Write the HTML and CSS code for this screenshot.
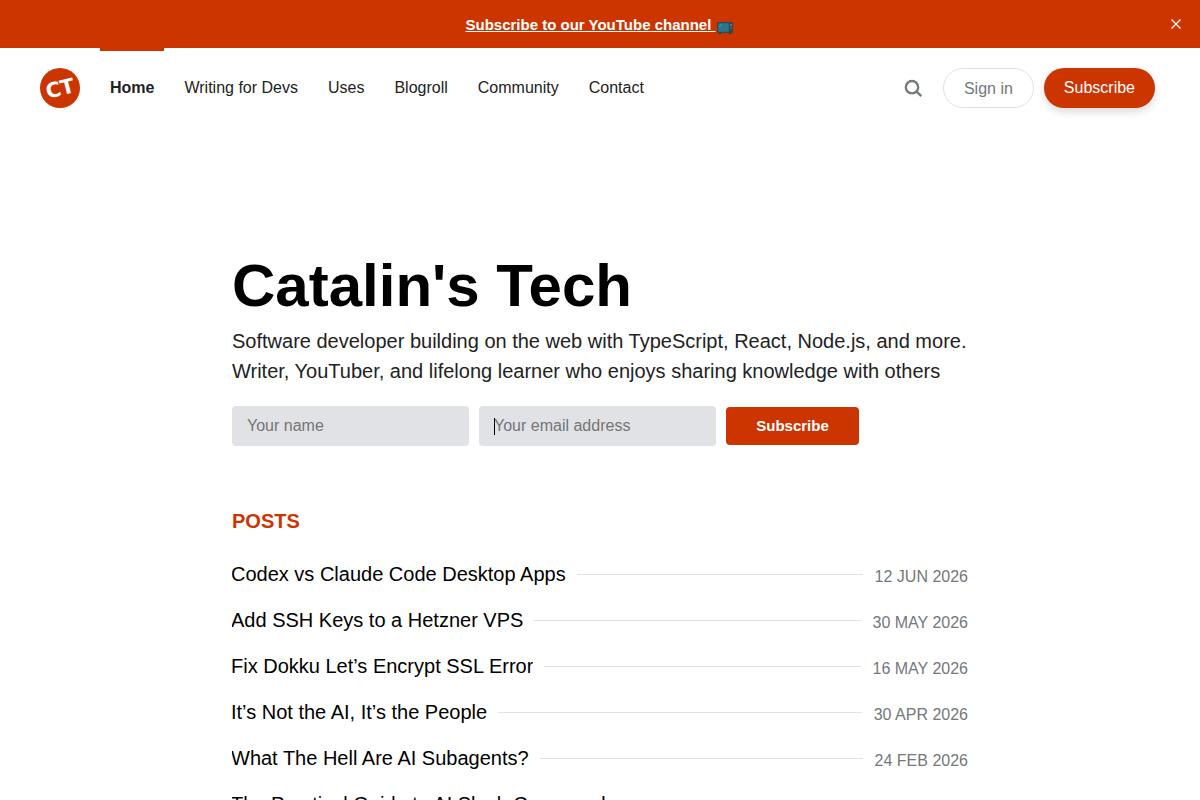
FILE: index.html
```html
<!DOCTYPE html>
<html lang="en">
<head>
    <meta charset="UTF-8">
    <meta name="viewport" content="width=device-width, initial-scale=1.0">
    <title>Catalin's Tech</title>
    <link rel="stylesheet" href="styles.css">
</head>
<body>

    <div class="announcement">
        <a href="#">Subscribe to our YouTube channel <svg class="tv" viewBox="0 0 19 14" width="19" height="14"><rect x="1" y="1" width="16" height="11" rx="1" fill="#37474f"/><rect x="2.2" y="2.3" width="10.6" height="8.4" rx="1" fill="#24788f"/><path d="M3.5 5.5l2-2" stroke="#58a5b5"/><path d="M15 3v2M15 6.5v1" stroke="#8aa0aa"/><path d="M3 12h2v1H3zM13 12h2v1h-2z" fill="#263238"/></svg></a>
        <button class="close" aria-label="Close">
            <svg width="10" height="10" viewBox="0 0 10 10"><path d="M0.5 0.5l9 9M9.5 0.5l-9 9" stroke="#fff" stroke-width="1.2"/></svg>
        </button>
    </div>

    <header class="header">
        <a href="#" class="logo">
            <svg width="40" height="40" viewBox="0 0 40 40">
                <circle cx="20" cy="20" r="20" fill="#cc3500"/>
                <text x="20" y="27.5" text-anchor="middle" transform="rotate(-14 20 20)">CT</text>
            </svg>
        </a>
        <nav class="menu">
            <a href="#" class="current">Home</a>
            <a href="#">Writing for Devs</a>
            <a href="#">Uses</a>
            <a href="#">Blogroll</a>
            <a href="#">Community</a>
            <a href="#">Contact</a>
        </nav>
        <div class="actions">
            <button class="search" aria-label="Search">
                <svg width="20" height="20" viewBox="0 0 20 20" fill="none" stroke="#73787b" stroke-width="2.3"><circle cx="9" cy="9.2" r="6.2"/><path d="M13.4 13.4l4.9 4.7"/></svg>
            </button>
            <a href="#" class="btn btn-light">Sign in</a>
            <a href="#" class="btn btn-primary">Subscribe</a>
        </div>
    </header>

    <main class="container">
        <h1>Catalin's Tech</h1>
        <p class="description">Software developer building on the web with TypeScript, React, Node.js, and more. Writer, YouTuber, and lifelong learner who enjoys sharing knowledge with others</p>

        <form class="subscribe-form">
            <input type="text" placeholder="Your name">
            <div class="field">
                <input type="email" placeholder="Your email address">
                <span class="caret"></span>
            </div>
            <button type="submit">Subscribe</button>
        </form>

        <h2>Posts</h2>
        <div class="posts">
            <a href="#" class="post"><h3>Codex vs Claude Code Desktop Apps</h3><time>12 Jun 2026</time></a>
            <a href="#" class="post"><h3>Add SSH Keys to a Hetzner VPS</h3><time>30 May 2026</time></a>
            <a href="#" class="post"><h3>Fix Dokku Let’s Encrypt SSL Error</h3><time>16 May 2026</time></a>
            <a href="#" class="post"><h3>It’s Not the AI, It’s the People</h3><time>30 Apr 2026</time></a>
            <a href="#" class="post"><h3>What The Hell Are AI Subagents?</h3><time>24 Feb 2026</time></a>
            <a href="#" class="post"><h3>The Practical Guide to AI Slash Commands</h3></a>
        </div>
    </main>

</body>
</html>
```

FILE: styles.css
```css
* {
    box-sizing: border-box;
}

body {
    font-family: "Liberation Sans", Arial, sans-serif;
    margin: 0;
    height: 800px;
    overflow: hidden;
    background: #fff;
    color: #222;
    font-size: 16px;
}

a {
    color: inherit;
    text-decoration: none;
}

button {
    border: none;
    background: none;
    padding: 0;
    font-family: inherit;
    cursor: pointer;
}

.announcement {
    position: relative;
    display: flex;
    align-items: center;
    justify-content: center;
    height: 48px;
    padding-top: 2px;
    background: #cc3500;
    color: #fff;
    font-size: 15px;
    font-weight: bold;
}

.announcement a {
    text-decoration: underline;
}

.tv {
    vertical-align: -5px;
}

.close {
    position: absolute;
    top: 19px;
    right: 19px;
    display: flex;
}

.header {
    display: flex;
    align-items: center;
    height: 80px;
    padding: 0 45px 0 40px;
}

.logo {
    display: flex;
    margin-right: 20px;
}

.logo text {
    font-family: "DejaVu Sans", sans-serif;
    font-size: 20.5px;
    font-weight: bold;
    fill: #fff;
}

.menu {
    display: flex;
    align-self: stretch;
    gap: 10px;
}

.menu a {
    padding: 0 10px;
    line-height: 74px;
    border-top: 3px solid transparent;
}

.menu .current {
    font-weight: bold;
    border-top-color: #cc3500;
}

.actions {
    display: flex;
    align-items: center;
    margin-left: auto;
}

.search {
    display: flex;
    margin-right: 20px;
}

.btn {
    height: 40px;
    padding: 0 20px;
    border-radius: 20px;
    line-height: 40px;
}

.btn-light {
    border: 1px solid #dfe1e3;
    color: #73787b;
    margin-right: 10px;
}

.btn-primary {
    background: #cc3500;
    color: #fff;
    box-shadow: 0 4px 8px rgba(0, 0, 0, 0.14);
}

.container {
    width: 736px;
    margin: 0 auto;
    padding-top: 122px;
}

h1 {
    margin: 0;
    color: #000;
    font-size: 60px;
    line-height: 72px;
}

.description {
    margin: 4px 0 20px;
    font-size: 20px;
    line-height: 30px;
}

.subscribe-form {
    display: flex;
    align-items: center;
    gap: 10px;
}

.subscribe-form input {
    display: block;
    width: 237px;
    height: 40px;
    padding: 0 15px;
    border: none;
    border-radius: 4px;
    background: #e0e2e5;
    font-family: inherit;
    font-size: 16px;
}

.subscribe-form input::placeholder {
    color: #757575;
}

.field {
    position: relative;
}

.caret {
    position: absolute;
    top: 12px;
    left: 15px;
    width: 1px;
    height: 17px;
    background: #000;
}

.subscribe-form button {
    width: 133px;
    height: 38px;
    padding-bottom: 2px;
    border-radius: 4px;
    background: #cc3500;
    color: #fff;
    font-size: 15px;
    font-weight: bold;
}

h2 {
    margin: 60px 0 15px;
    color: #cc3500;
    font-size: 20px;
    line-height: 30px;
    text-transform: uppercase;
}

.post {
    display: flex;
    align-items: center;
    height: 46px;
    color: #000;
}

.post h3 {
    margin: 0;
    overflow: hidden;
    font-size: 20px;
    font-weight: normal;
    text-indent: -1px;
}

.post::after {
    content: "";
    order: 1;
    flex: 1;
    height: 1px;
    margin: 0 12px 0 11px;
    background: #dfe1e3;
}

.post:last-child::after {
    visibility: hidden;
}

.post time {
    order: 2;
    padding-top: 6px;
    color: #73787b;
    text-transform: uppercase;
}
```
